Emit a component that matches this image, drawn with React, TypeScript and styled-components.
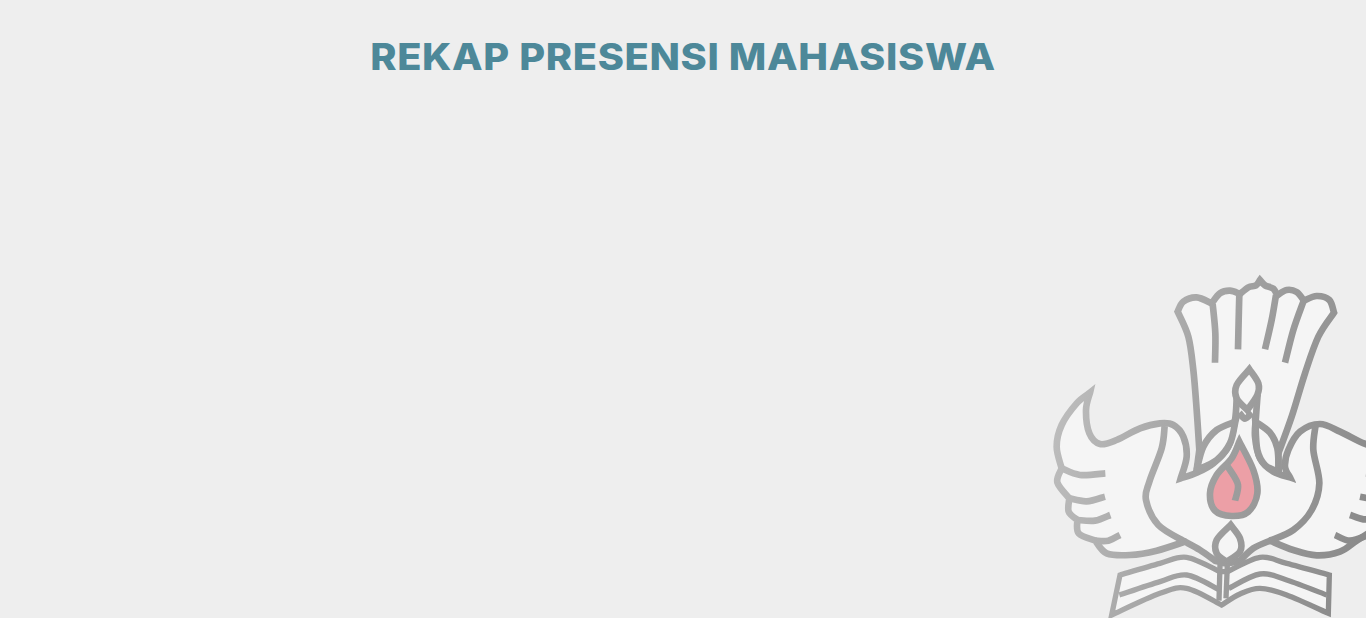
import React from 'react';
import styled, { createGlobalStyle } from 'styled-components';

type Pt = [number, number];

const GlobalStyle = createGlobalStyle`
    html, body {
        margin: 0;
        height: 100%;
        background: #eeeeee;
        overflow: hidden;
    }
`

const Page = styled.div`
    position: relative;
    height: 618px;
    overflow: hidden;
    padding-top: 35px;
    box-sizing: border-box;
`

const Title = styled.h1`
    margin: 0;
    text-align: center;
    font-family: "Inter", "Liberation Sans", sans-serif;
    font-size: 37px;
    font-weight: 800;
    line-height: 44px;
    letter-spacing: 0.6px;
    color: #4d8899;
    transform: scaleX(1.075);
`

const Emblem = styled.svg`
    position: absolute;
    right: 0;
    bottom: 0;
    width: 326px;
    height: 348px;
`

// catmull-rom through the points, each list is one smooth run and corners sit between lists
const smooth = (pts: Pt[]) => {
    let d = '';
    for (let i = 0; i < pts.length - 1; i++) {
        const p0 = pts[Math.max(i - 1, 0)];
        const p1 = pts[i];
        const p2 = pts[i + 1];
        const p3 = pts[Math.min(i + 2, pts.length - 1)];
        const c1 = [p1[0] + (p2[0] - p0[0]) / 6, p1[1] + (p2[1] - p0[1]) / 6];
        const c2 = [p2[0] - (p3[0] - p1[0]) / 6, p2[1] - (p3[1] - p1[1]) / 6];
        d += `C${c1[0]} ${c1[1]} ${c2[0]} ${c2[1]} ${p2[0]} ${p2[1]}`;
    }
    return d;
};

const outline = (runs: Pt[][], close = true) =>
    `M${runs[0][0][0]} ${runs[0][0][1]}` + runs.map(smooth).join('') + (close ? 'Z' : '');

const hand = outline([
    [[660, 30], [675, 46], [700, 56], [712, 76]],
    [[712, 76], [740, 60], [770, 66], [792, 92]],
    [[792, 92], [830, 78], [868, 90], [882, 128]],
    [[882, 128], [835, 200], [795, 310], [755, 440], [715, 550]],
    [[715, 550], [600, 600], [478, 540]],
    [[478, 540], [470, 420], [460, 300], [445, 200], [413, 125]],
    [[413, 125], [430, 95], [470, 82], [515, 100]],
    [[515, 100], [540, 70], [570, 62], [600, 72]],
    [[600, 72], [625, 52], [648, 46], [660, 30]],
]);

const dove = outline([
    [[150, 368], [110, 400], [65, 465], [50, 530], [65, 595]],
    [[65, 595], [52, 637], [88, 685]],
    [[88, 685], [86, 725], [112, 750]],
    [[112, 750], [116, 790], [166, 812]],
    [[166, 812], [200, 850], [270, 855], [350, 842], [435, 815]],
    [[435, 815], [480, 840], [525, 872]],
    [[525, 872], [560, 880], [600, 872]],
    [[600, 872], [640, 835], [690, 812]],
    [[690, 812], [760, 840], [830, 856], [900, 845], [950, 812], [1000, 780]],
    [[1000, 780], [1000, 530]],
    [[1000, 530], [960, 515], [900, 485], [840, 462], [780, 485], [745, 540], [735, 590], [750, 622]],
    [[750, 622], [700, 605], [660, 565], [645, 500], [648, 440], [652, 385]],
    [[652, 385], [590, 385]],
    [[590, 385], [585, 450], [565, 530], [520, 580], [470, 608], [422, 625]],
    [[422, 625], [440, 560], [430, 500], [400, 465], [360, 460], [300, 475], [230, 510], [180, 522], [148, 490], [138, 420], [150, 368]],
]);

const book = outline([
    [[240, 915], [360, 880], [440, 862], [540, 905]],
    [[540, 905], [562, 905]],
    [[562, 905], [660, 862], [740, 880], [868, 915]],
    [[868, 915], [865, 1030]],
    [[865, 1030], [740, 975], [660, 955], [600, 972], [545, 1005]],
    [[545, 1005], [440, 955], [360, 970], [215, 1035]],
    [[215, 1035], [240, 915]],
]);

const lines: Pt[][] = [
    // fingers
    [[518, 102], [526, 190], [525, 278]],
    [[598, 72], [596, 150], [594, 238]],
    [[708, 75], [695, 150], [675, 238]],
    [[790, 95], [760, 180], [735, 278]],
    // left feathers
    [[65, 595], [120, 615], [196, 610]],
    [[88, 685], [140, 694], [195, 680]],
    [[112, 750], [165, 752], [211, 735]],
    [[166, 812], [205, 812], [240, 795]],
    // right feathers
    [[978, 610], [1000, 612]],
    [[960, 680], [1000, 688]],
    [[930, 735], [970, 748], [1000, 745]],
    [[885, 795], [930, 812], [985, 795]],
    // dove body
    [[374, 468], [365, 535], [328, 635], [318, 690], [355, 765], [435, 815]],
    [[826, 470], [820, 540], [838, 640], [815, 720], [760, 780], [690, 812]],
    // legs by the tail
    [[478, 540], [470, 600]],
    [[715, 550], [716, 608]],
    // fork under the head
    [[598, 428], [615, 446], [636, 428]],
];

const pageLines: Pt[][] = [
    [[238, 975], [360, 935], [440, 915], [536, 958]],
    [[566, 955], [660, 912], [740, 930], [860, 975]],
    [[540, 885], [537, 992]],
    [[562, 885], [558, 985]],
];

const leaves = [
    outline([
        [[470, 600], [490, 530], [530, 480], [586, 455]],
        [[586, 455], [570, 520], [530, 570], [470, 600]],
    ]),
    outline([
        [[646, 455], [690, 488], [712, 535], [716, 606]],
        [[716, 606], [675, 585], [652, 540], [646, 455]],
    ]),
];

const head = outline([
    [[628, 298], [655, 340], [652, 375], [622, 420]],
    [[622, 420], [590, 385], [590, 345], [628, 298]],
]);

const candle = outline([
    [[572, 765], [600, 805], [600, 845], [560, 875]],
    [[560, 875], [530, 850], [530, 810], [572, 765]],
]);

const flame = outline([
    [[598, 515], [640, 600], [652, 670], [625, 725], [575, 738], [525, 722], [510, 670], [530, 615], [575, 565], [598, 515]],
]);

const GovEmblem = () => (
    <Emblem viewBox="0 0 978 1044" aria-hidden="true">
        <defs>
            <linearGradient id="rim" gradientUnits="userSpaceOnUse" x1="40" y1="500" x2="978" y2="700">
                <stop offset="0" stopColor="#bcbcbc" />
                <stop offset="0.5" stopColor="#a0a0a0" />
                <stop offset="1" stopColor="#8b8b8b" />
            </linearGradient>
        </defs>
        <g fill="#f5f5f5" stroke="url(#rim)" strokeWidth="20" strokeLinejoin="miter" strokeMiterlimit="6">
            <path d={hand} />
            <path d={dove} />
            <path d={book} strokeWidth="16" />
            {leaves.map((d, i) => <path key={i} d={d} />)}
            <path d={head} />
            <path d={candle} />
            <path d={flame} fill="#ec9fa6" />
        </g>
        <g fill="none" stroke="url(#rim)" strokeWidth="20">
            {lines.map((pts, i) => <path key={i} d={outline([pts], false)} />)}
            {pageLines.map((pts, i) => <path key={i} d={outline([pts], false)} strokeWidth="16" />)}
            <path d={outline([[[555, 580], [570, 600], [594, 645], [585, 692]]], false)} />
        </g>
    </Emblem>
);

export default function App() {
    return (
        <Page>
            <GlobalStyle />
            <Title>REKAP PRESENSI MAHASISWA</Title>
            <GovEmblem />
        </Page>
    );
}
